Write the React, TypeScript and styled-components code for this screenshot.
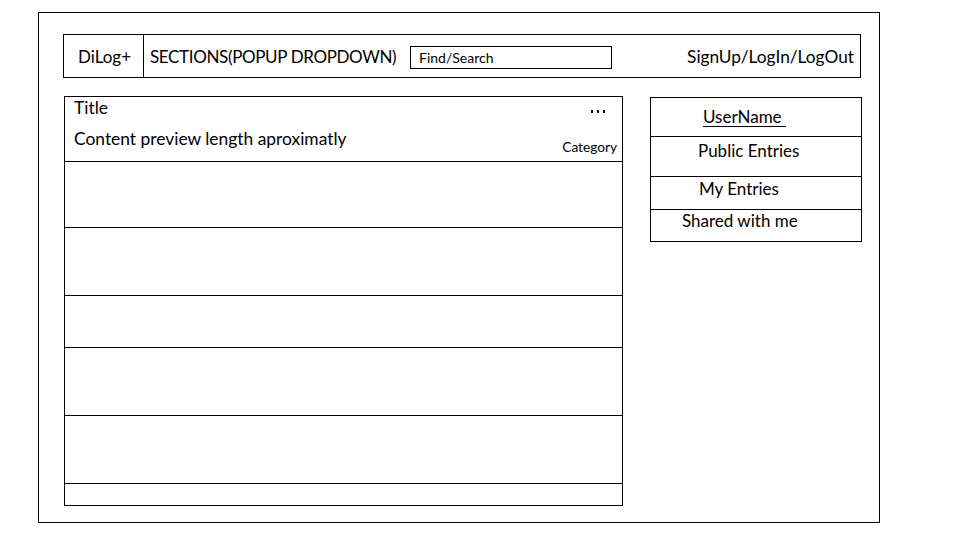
import React from "react";
import styled, { createGlobalStyle } from "styled-components";

const Global = createGlobalStyle`
  html, body { margin: 0; padding: 0; background: #fff; }
  body { font-family: Lato, "Open Sans", sans-serif; color: #000; }
  * { box-sizing: border-box; }
`;

const Frame = styled.div`
  width: 842px;
  height: 511px;
  margin: 12px 0 0 38px;
  border: 1px solid #000;
  padding: 21px 0 0 24px;
  display: flex;
  flex-direction: column;
`;

const Header = styled.header`
  width: 798px;
  height: 44px;
  border: 1px solid #000;
  display: flex;
  align-items: stretch;
  font-size: 17px;
`;

const Logo = styled.div`
  width: 80px;
  border-right: 1px solid #000;
  display: flex;
  align-items: center;
  justify-content: center;
  padding-left: 2px;
`;

const NavCell = styled.div`
  flex: 1;
  display: flex;
  align-items: center;
  padding: 0 6px 0 6px;
`;

const Sections = styled.div`
  width: 260px;
  white-space: nowrap;
  letter-spacing: -0.35px;
`;

const Search = styled.div`
  width: 202px;
  height: 23px;
  margin-top: 2px;
  border: 1px solid #000;
  font-size: 14px;
  display: flex;
  align-items: center;
  padding-left: 8px;
`;

const Auth = styled.div`
  margin-left: auto;
  white-space: nowrap;
  font-size: 17.3px;
`;

const Main = styled.div`
  display: flex;
  align-items: flex-start;
  gap: 27px;
  margin-top: 18px;
  padding-left: 1px;
`;

const List = styled.section`
  width: 559px;
  height: 410px;
  border: 1px solid #000;
  display: flex;
  flex-direction: column;
`;

const Row = styled.div<{ $h: number; $last?: boolean }>`
  height: ${(p) => p.$h}px;
  border-bottom: ${(p) => (p.$last ? "none" : "1px solid #000")};
  flex: none;
`;

const EntryRow = styled.div`
  height: 65px;
  border-bottom: 1px solid #000;
  padding: 0 5px 0 9px;
  display: flex;
  flex-direction: column;
  font-size: 17.4px;
`;

const EntryTop = styled.div`
  display: flex;
  justify-content: space-between;
  align-items: flex-start;
  height: 20px;
  line-height: 20px;
  margin-top: 1px;
`;

const Dots = styled.div`
  display: flex;
  gap: 4px;
  margin: 12px 12px 0 0;
  & > span {
    width: 2px;
    height: 3px;
    background: #000;
  }
`;

const Preview = styled.div`
  display: flex;
  justify-content: space-between;
  align-items: flex-end;
  margin-top: 10px;
`;

const Category = styled.span`
  font-size: 13.7px;
  margin-bottom: -6px;
`;

const Side = styled.aside`
  width: 212px;
  margin-top: 1px;
  border: 1px solid #000;
  display: flex;
  flex-direction: column;
  font-size: 17px;
`;

const SideItem = styled.div<{ $h: number; $left: number; $top: number; $last?: boolean }>`
  height: ${(p) => p.$h}px;
  padding: ${(p) => p.$top}px 0 0 ${(p) => p.$left}px;
  border-bottom: ${(p) => (p.$last ? "none" : "1px solid #000")};
  line-height: 20px;
  white-space: pre;
`;

const Underlined = styled.span`
  text-decoration: underline;
  text-underline-offset: 3px;
`;

export default function App() {
  const rows = [66, 68, 52, 68, 68];
  return (
    <>
      <Global />
      <Frame>
        <Header>
          <Logo>DiLog+</Logo>
          <NavCell>
            <Sections>SECTIONS(POPUP DROPDOWN)</Sections>
            <Search>Find/Search</Search>
            <Auth>SignUp/LogIn/LogOut</Auth>
          </NavCell>
        </Header>
        <Main>
          <List>
            <EntryRow>
              <EntryTop>
                <span>Title</span>
                <Dots>
                  <span />
                  <span />
                  <span />
                </Dots>
              </EntryTop>
              <Preview>
                <span>Content preview length aproximatly</span>
                <Category>Category</Category>
              </Preview>
            </EntryRow>
            {rows.map((h, i) => (
              <Row key={i} $h={h} />
            ))}
            <Row $h={21} $last />
          </List>
          <Side>
            <SideItem $h={39} $left={52} $top={9}>
              <Underlined>UserName </Underlined>
            </SideItem>
            <SideItem $h={40} $left={47} $top={4}>Public Entries</SideItem>
            <SideItem $h={33} $left={48} $top={2}>My Entries</SideItem>
            <SideItem $h={31} $left={31} $top={1} $last>Shared with me</SideItem>
          </Side>
        </Main>
      </Frame>
    </>
  );
}
